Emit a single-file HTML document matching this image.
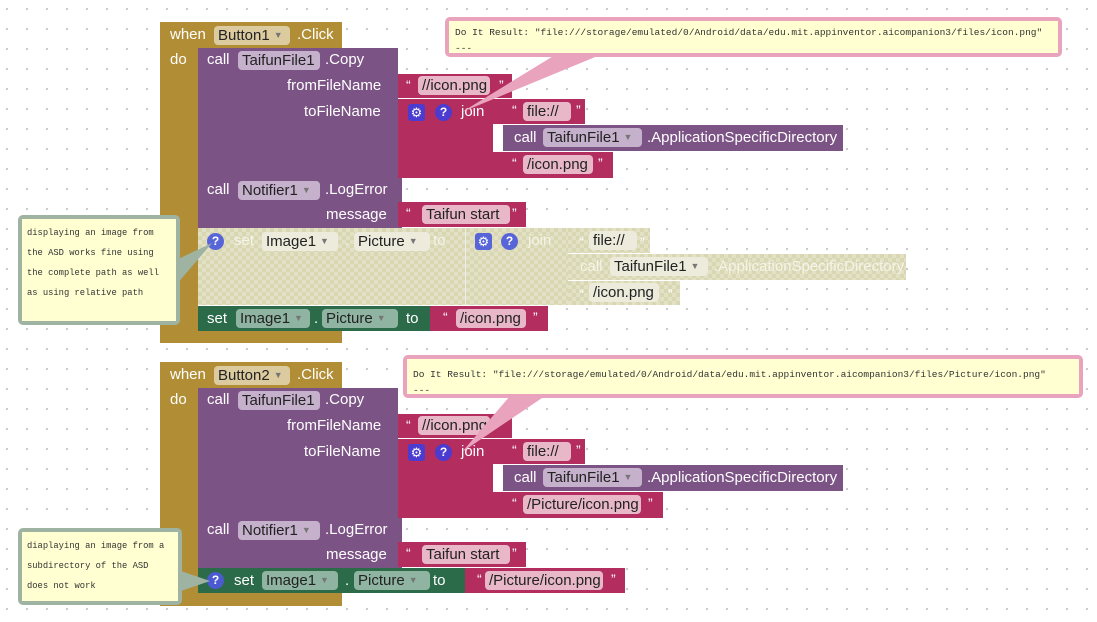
<!DOCTYPE html>
<html><head><meta charset="utf-8"><style>
body{margin:0;width:1097px;height:622px;overflow:hidden;position:relative;background:#fff;
background-image:radial-gradient(circle,#c8c8c8 1px,transparent 1.3px);background-size:20px 20px;background-position:-3px -1px;
font-family:"Liberation Sans",sans-serif}
div,span{position:absolute;box-sizing:border-box}
.t{color:#fff;font-size:15px;line-height:18px;white-space:nowrap}
.f{height:19px;border-radius:4px;color:#222;font-size:15px;line-height:19px;padding:0 4px;white-space:nowrap;overflow:hidden}
.f i{font-style:normal;font-size:9px;color:#777;margin-left:4px;vertical-align:2px}
.g{background:#b18e35}.p{background:#7c5385}.m{background:#b32d5e}.gr{background:#2b6b4a}
.d{background:#d9d7b2;background-image:linear-gradient(45deg,rgba(255,255,255,.25) 25%,transparent 25%,transparent 75%,rgba(255,255,255,.25) 75%),linear-gradient(45deg,rgba(255,255,255,.25) 25%,transparent 25%,transparent 75%,rgba(255,255,255,.25) 75%);background-size:8px 8px;background-position:0 0,4px 4px}
.fg{background:#dccb9e}.fp{background:#c6b1cc}.fm{background:#e8b7c8}.fgr{background:#8fb4a1}.fd{background:#ecebdc}
.q{color:#fff;font-size:14px;line-height:14px}
.ic{width:17px;height:17px;border-radius:50%;background:#4b3bd0;color:#fff;font-size:12px;font-weight:bold;text-align:center;line-height:17px}
.gear{width:17px;height:17px;border-radius:3px;background:#4b3bd0;color:#fff;font-size:13px;text-align:center;line-height:17px}
.cm{background:#9fb3a3;border-radius:5px;padding:4px}
.cm>div{position:static;background:#ffffd2;width:100%;height:100%;font-family:"Liberation Mono",monospace;font-size:8.8px;line-height:20px;padding:4px 5px;color:#333;white-space:nowrap}
.bb{background:#e9a3bd;border-radius:5px;padding:4px}
.bb>div{position:static;background:#ffffd2;width:100%;height:100%;font-family:"Liberation Mono",monospace;font-size:9.5px;line-height:16px;padding:4px 6px;color:#333;white-space:nowrap;overflow:hidden}
</style></head><body>

<!-- EVENT 1 -->
<div class="g" style="left:160px;top:22px;width:182px;height:26px"></div>
<div class="g" style="left:160px;top:22px;width:38px;height:321px"></div>
<div class="g" style="left:160px;top:331px;width:182px;height:12px"></div>
<span class="t" style="left:170px;top:26px">when</span>
<span class="f fg" style="left:214px;top:26px;width:76px">Button1<i>▼</i></span>
<span class="t" style="left:297px;top:26px">.Click</span>
<span class="t" style="left:170px;top:51px">do</span>

<div class="p" style="left:198px;top:48px;width:200px;height:130px"></div>
<span class="t" style="left:207px;top:51px">call</span>
<span class="f fp" style="left:238px;top:51px;width:82px">TaifunFile1<i>▼</i></span>
<span class="t" style="left:325px;top:51px">.Copy</span>
<span class="t" style="left:287px;top:77px">fromFileName</span>
<span class="t" style="left:304px;top:103px">toFileName</span>

<div class="m" style="left:398px;top:74px;width:114px;height:24px"></div>
<span class="q" style="left:406px;top:78px">“</span><span class="f fm" style="left:418px;top:76px;width:72px">//icon.png</span><span class="q" style="left:499px;top:78px">”</span>
<div class="m" style="left:398px;top:99px;width:95px;height:79px"></div>
<span class="gear" style="left:408px;top:104px">⚙</span><span class="ic" style="left:435px;top:104px">?</span>
<span class="t" style="left:461px;top:103px">join</span>
<div class="m" style="left:493px;top:99px;width:92px;height:25px"></div>
<span class="q" style="left:512px;top:103px">“</span><span class="f fm" style="left:523px;top:102px;width:48px">file://</span><span class="q" style="left:576px;top:103px">”</span>
<div class="p" style="left:503px;top:125px;width:340px;height:26px"></div>
<span class="t" style="left:514px;top:129px">call</span>
<span class="f fp" style="left:543px;top:128px;width:99px">TaifunFile1<i>▼</i></span>
<span class="t" style="left:647px;top:129px">.ApplicationSpecificDirectory</span>
<div class="m" style="left:493px;top:152px;width:120px;height:26px"></div>
<span class="q" style="left:512px;top:156px">“</span><span class="f fm" style="left:523px;top:155px;width:70px">/icon.png</span><span class="q" style="left:598px;top:156px">”</span>

<div class="p" style="left:198px;top:178px;width:204px;height:50px"></div>
<span class="t" style="left:207px;top:181px">call</span>
<span class="f fp" style="left:238px;top:181px;width:82px">Notifier1<i>▼</i></span>
<span class="t" style="left:325px;top:181px">.LogError</span>
<span class="t" style="left:326px;top:206px">message</span>
<div class="m" style="left:398px;top:202px;width:128px;height:25px"></div>
<span class="q" style="left:406px;top:206px">“</span><span class="f fm" style="left:422px;top:205px;width:88px">Taifun start</span><span class="q" style="left:512px;top:206px">”</span>

<div class="d" style="left:198px;top:228px;width:267px;height:77px"></div>
<div class="d" style="left:465px;top:228px;width:103px;height:77px;border-left:1px solid #eee"></div>
<div class="d" style="left:568px;top:228px;width:82px;height:25px"></div>
<div class="d" style="left:568px;top:254px;width:338px;height:26px"></div>
<div class="d" style="left:568px;top:281px;width:112px;height:24px"></div>
<span class="ic" style="left:207px;top:233px;background:#5865d8">?</span>
<span class="t" style="left:234px;top:232px;color:#f4f4e8">set</span>
<span class="f fd" style="left:262px;top:232px;width:76px">Image1<i>▼</i></span>
<span class="t" style="left:345px;top:232px;color:#f4f4e8">.</span>
<span class="f fd" style="left:354px;top:232px;width:76px">Picture<i>▼</i></span>
<span class="t" style="left:433px;top:232px;color:#f4f4e8">to</span>
<span class="gear" style="left:475px;top:233px;background:#5865d8">⚙</span><span class="ic" style="left:501px;top:233px;background:#5865d8">?</span>
<span class="t" style="left:528px;top:232px;color:#f4f4e8">join</span>
<span class="q" style="left:579px;top:235px">“</span><span class="f fd" style="left:589px;top:231px;width:48px">file://</span><span class="q" style="left:640px;top:235px">”</span>
<span class="t" style="left:580px;top:258px;color:#f4f4e8">call</span>
<span class="f fd" style="left:610px;top:257px;width:98px">TaifunFile1<i>▼</i></span>
<span class="t" style="left:714px;top:258px;color:#f4f4e8">.ApplicationSpecificDirectory</span>
<span class="q" style="left:579px;top:287px">“</span><span class="f fd" style="left:589px;top:283px;width:70px">/icon.png</span><span class="q" style="left:668px;top:287px">”</span>

<div class="gr" style="left:198px;top:306px;width:232px;height:25px"></div>
<span class="t" style="left:207px;top:310px">set</span>
<span class="f fgr" style="left:236px;top:309px;width:74px">Image1<i>▼</i></span>
<span class="t" style="left:314px;top:310px">.</span>
<span class="f fgr" style="left:322px;top:309px;width:76px">Picture<i>▼</i></span>
<span class="t" style="left:406px;top:310px">to</span>
<div class="m" style="left:430px;top:306px;width:118px;height:25px"></div>
<span class="q" style="left:443px;top:310px">“</span><span class="f fm" style="left:456px;top:309px;width:70px">/icon.png</span><span class="q" style="left:533px;top:310px">”</span>

<!-- EVENT 2 -->
<div class="g" style="left:160px;top:362px;width:182px;height:26px"></div>
<div class="g" style="left:160px;top:362px;width:38px;height:244px"></div>
<div class="g" style="left:160px;top:593px;width:182px;height:13px"></div>
<span class="t" style="left:170px;top:366px">when</span>
<span class="f fg" style="left:214px;top:366px;width:76px">Button2<i>▼</i></span>
<span class="t" style="left:297px;top:366px">.Click</span>
<span class="t" style="left:170px;top:391px">do</span>

<div class="p" style="left:198px;top:388px;width:200px;height:130px"></div>
<span class="t" style="left:207px;top:391px">call</span>
<span class="f fp" style="left:238px;top:391px;width:82px">TaifunFile1<i>▼</i></span>
<span class="t" style="left:325px;top:391px">.Copy</span>
<span class="t" style="left:287px;top:417px">fromFileName</span>
<span class="t" style="left:304px;top:443px">toFileName</span>

<div class="m" style="left:398px;top:414px;width:114px;height:24px"></div>
<span class="q" style="left:406px;top:418px">“</span><span class="f fm" style="left:418px;top:416px;width:72px">//icon.png</span><span class="q" style="left:499px;top:418px">”</span>
<div class="m" style="left:398px;top:439px;width:95px;height:79px"></div>
<span class="gear" style="left:408px;top:444px">⚙</span><span class="ic" style="left:435px;top:444px">?</span>
<span class="t" style="left:461px;top:443px">join</span>
<div class="m" style="left:493px;top:439px;width:92px;height:25px"></div>
<span class="q" style="left:512px;top:443px">“</span><span class="f fm" style="left:523px;top:442px;width:48px">file://</span><span class="q" style="left:576px;top:443px">”</span>
<div class="p" style="left:503px;top:465px;width:340px;height:26px"></div>
<span class="t" style="left:514px;top:469px">call</span>
<span class="f fp" style="left:543px;top:468px;width:99px">TaifunFile1<i>▼</i></span>
<span class="t" style="left:647px;top:469px">.ApplicationSpecificDirectory</span>
<div class="m" style="left:493px;top:492px;width:170px;height:26px"></div>
<span class="q" style="left:512px;top:496px">“</span><span class="f fm" style="left:523px;top:495px;width:118px">/Picture/icon.png</span><span class="q" style="left:648px;top:496px">”</span>

<div class="p" style="left:198px;top:518px;width:204px;height:50px"></div>
<span class="t" style="left:207px;top:521px">call</span>
<span class="f fp" style="left:238px;top:521px;width:82px">Notifier1<i>▼</i></span>
<span class="t" style="left:325px;top:521px">.LogError</span>
<span class="t" style="left:326px;top:546px">message</span>
<div class="m" style="left:398px;top:542px;width:128px;height:25px"></div>
<span class="q" style="left:406px;top:546px">“</span><span class="f fm" style="left:422px;top:545px;width:88px">Taifun start</span><span class="q" style="left:512px;top:546px">”</span>

<div class="gr" style="left:198px;top:568px;width:267px;height:25px"></div>
<span class="ic" style="left:207px;top:572px;background:#4b5ad0">?</span>
<span class="t" style="left:234px;top:572px">set</span>
<span class="f fgr" style="left:262px;top:571px;width:76px">Image1<i>▼</i></span>
<span class="t" style="left:345px;top:572px">.</span>
<span class="f fgr" style="left:354px;top:571px;width:76px">Picture<i>▼</i></span>
<span class="t" style="left:433px;top:572px">to</span>
<div class="m" style="left:465px;top:568px;width:160px;height:25px"></div>
<span class="q" style="left:477px;top:572px">“</span><span class="f fm" style="left:485px;top:571px;width:118px">/Picture/icon.png</span><span class="q" style="left:611px;top:572px">”</span>

<!-- pointers -->
<svg style="position:absolute;left:0;top:0" width="1097" height="622">
<polygon points="555,55 600,55 462,112" fill="#e9a3bd"/>
<polygon points="510,396 545,396 462,452" fill="#e9a3bd"/>
<polygon points="176,260 176,285 212,243" fill="#9fb3a3"/>
<polygon points="178,570 178,592 210,581" fill="#9fb3a3"/>
</svg>
<div class="cm" style="left:18px;top:215px;width:162px;height:110px"><div>displaying an image from<br>the ASD works fine using<br>the complete path as well<br>as using relative path</div></div>
<div class="cm" style="left:18px;top:528px;width:164px;height:77px"><div>diaplaying an image from a<br>subdirectory of the ASD<br>does not work</div></div>

<div class="bb" style="left:445px;top:17px;width:617px;height:40px"><div>Do It Result: "file:///storage/emulated/0/Android/data/edu.mit.appinventor.aicompanion3/files/icon.png"<br>---</div></div>
<div class="bb" style="left:403px;top:355px;width:680px;height:43px"><div style="padding-top:8px">Do It Result: "file:///storage/emulated/0/Android/data/edu.mit.appinventor.aicompanion3/files/Picture/icon.png"<br>---</div></div>
</body></html>
